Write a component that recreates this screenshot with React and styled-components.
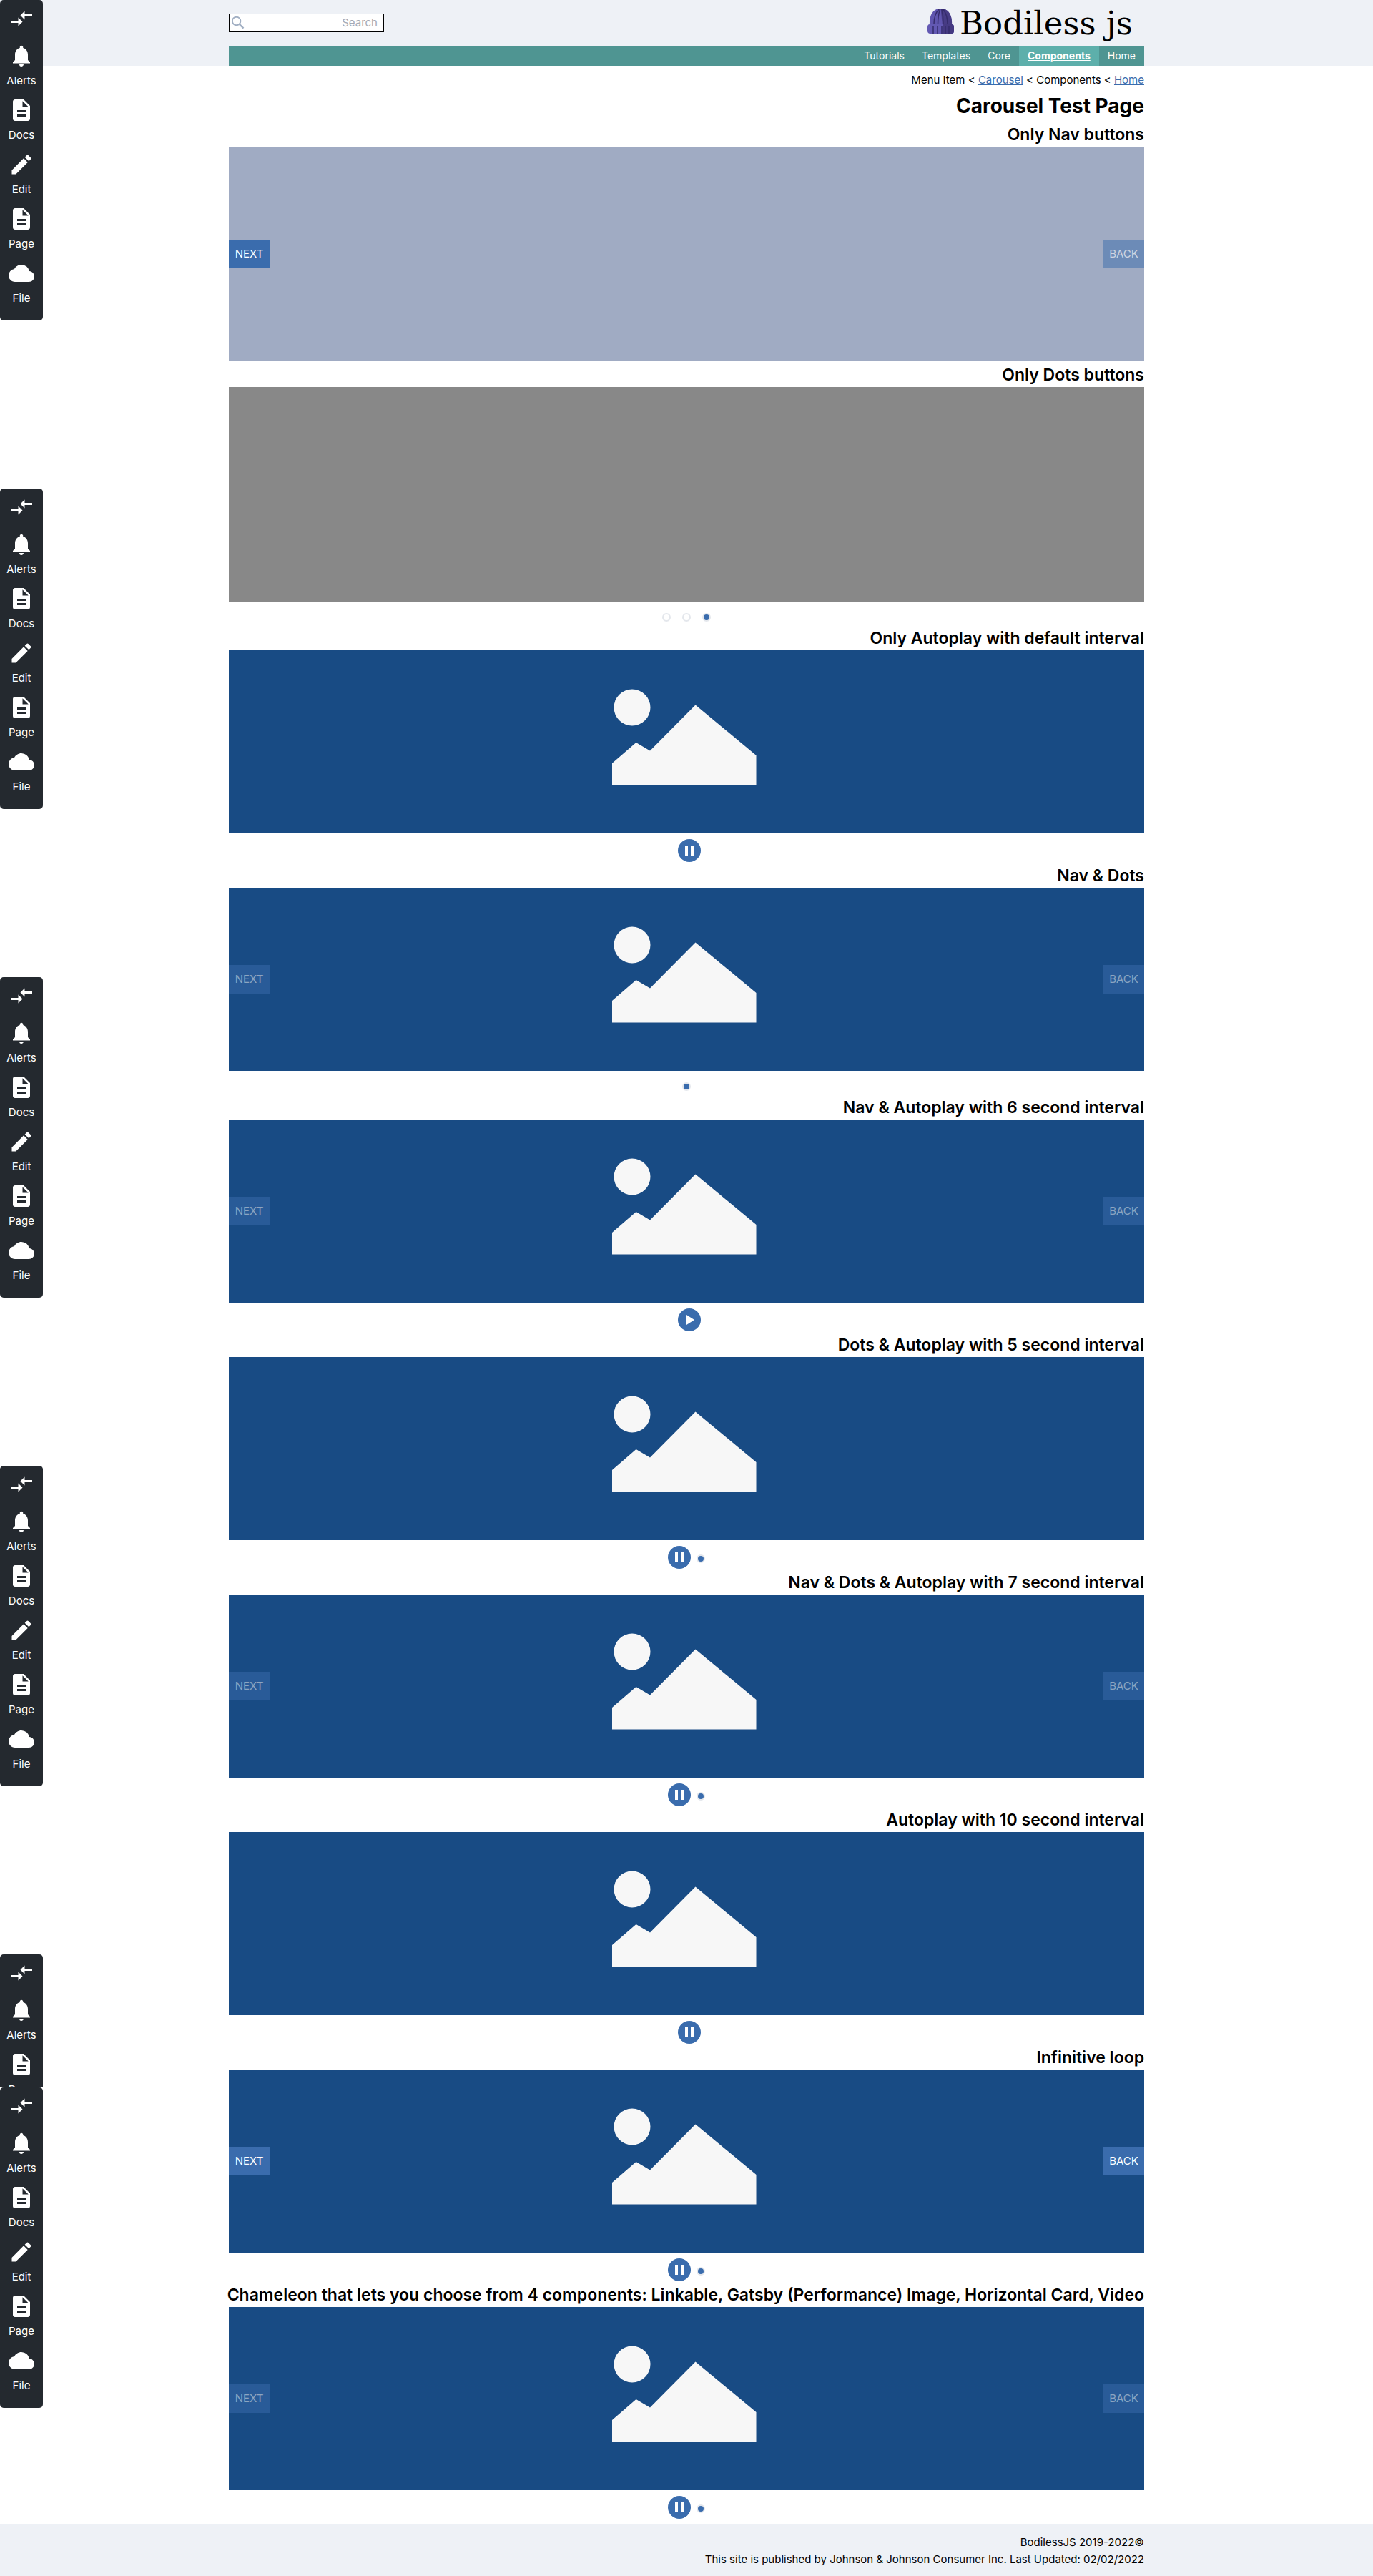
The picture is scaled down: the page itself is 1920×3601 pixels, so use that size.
import React from 'react';
import styled, { createGlobalStyle } from 'styled-components';
import { MdCompareArrows, MdNotifications, MdDescription, MdEdit, MdCloud } from 'react-icons/md';

const GlobalStyle = createGlobalStyle`
  *, *::before, *::after { box-sizing: border-box; }
  body {
    margin: 0;
    background: #fff;
    color: #000;
    font: 16px/24px Inter, 'Liberation Sans', sans-serif;
  }
  button { font: inherit; border: 0; padding: 0; cursor: pointer; }
  h1, h2, p, ul { margin: 0; padding: 0; }
  svg { display: block; flex: none; }
`;

const Page = styled.div`
  position: relative;
`;

const Container = styled.div`
  width: 100%;
  max-width: 1280px;
  margin: 0 auto;
`;

const Header = styled.header`
  background: #eef1f6;
`;

const HeaderTop = styled(Container)`
  display: flex;
  justify-content: space-between;
  align-items: center;
  height: 64px;
`;

const SearchForm = styled.form`
  display: flex;
  align-items: center;
  width: 217px;
  height: 26px;
  padding: 0 8px 0 2px;
  border: 1px solid #000;
  background: #fff;
`;

const SearchButton = styled.button`
  background: none;
  color: #a1afc3;
`;

const SearchInput = styled.input`
  flex: 1;
  min-width: 0;
  border: 0;
  padding: 0;
  background: none;
  outline: none;
  font: inherit;
  font-size: 15px;
  text-align: right;
  &::placeholder { color: #a3a9b5; opacity: 1; }
`;

const Logo = styled.a`
  display: flex;
  margin-right: 12px;
  color: #000;
`;

const Nav = styled.nav`
  display: flex;
  justify-content: flex-end;
  max-width: 1280px;
  margin: 0 auto;
  background: #4f9592;
`;

const NavLink = styled.a`
  padding: 0 12px;
  line-height: 28px;
  font-size: 14px;
  color: #fff;
  background: ${(p) => (p.$active ? '#5dafab' : 'transparent')};
  font-weight: ${(p) => (p.$active ? 700 : 400)};
  text-decoration: ${(p) => (p.$active ? 'underline' : 'none')};
`;

const Breadcrumbs = styled.nav`
  padding-top: 8px;
  font-size: 15px;
  text-align: right;
  a { color: #3a6cad; }
`;

const Title = styled.h1`
  padding: 6px 0 3px;
  font-size: 28px;
  line-height: 36px;
  text-align: right;
`;

const Heading = styled.h2`
  display: flex;
  justify-content: flex-end;
  padding: 5px 0 3px;
  font-size: 23px;
  font-weight: 600;
  line-height: 28px;
  white-space: nowrap;
`;

const Slide = styled.div`
  position: relative;
  display: flex;
  justify-content: center;
  height: ${(p) => (p.$color ? '300px' : '256px')};
  background: ${(p) => p.$color || '#184b84'};
`;

const SlideButton = styled.button`
  position: absolute;
  top: 50%;
  ${(p) => p.$side}: 0;
  width: 57px;
  height: 40px;
  margin-top: -20px;
  background: #3a6cad;
  color: #fff;
  font-size: 15px;
  opacity: ${(p) => (p.disabled ? 0.5 : 1)};
`;

const Controls = styled.div`
  display: flex;
  justify-content: center;
  align-items: center;
  padding-top: 8px;
`;

const PlayButton = styled.button`
  display: grid;
  place-items: center;
  width: 32px;
  height: 32px;
  margin-left: 8px;
  border-radius: 50%;
  background: #3a6cad;
`;

const Dots = styled.div`
  display: flex;
  gap: 16px;
  padding: 8px 8px 4px;
`;

const Dot = styled.button`
  width: 12px;
  height: 12px;
  border: 2px solid #e4e7ec;
  border-radius: 50%;
  background: ${(p) => (p.$current ? '#3a6cad' : '#fff')};
`;

const Footer = styled.footer`
  margin-top: 8px;
  padding: 13px 0 11px;
  background: #eef1f6;
  font-size: 15px;
  text-align: right;
`;

const Rail = styled.div`
  position: absolute;
  top: 0;
  left: 0;
  width: 60px;
`;

const RailSegment = styled.div`
  height: ${(p) => p.$height}px;
  overflow: hidden;
`;

const Toolbar = styled.div`
  display: flex;
  flex-direction: column;
  align-items: center;
  gap: 11px;
  padding: 8px 0 19px;
  border-radius: 5px;
  background: #24292f;
  color: #fff;
`;

const ToolButton = styled.button`
  display: flex;
  flex-direction: column;
  align-items: center;
  gap: 5px;
  background: none;
  color: inherit;
  font-size: 15px;
  line-height: 24px;
`;

const ToggleButton = styled(ToolButton)`
  margin-bottom: 5px;
`;

function BodilessLogo() {
  return (
    <svg width="292" height="60" viewBox="0 0 292 60" role="img" aria-label="Bodiless js">
      <g transform="translate(1 6)">
        <path d="M3 28C2 11 9 4 18.500 4s16.500 7 15.500 24z" fill="#5f55ae" />
        <path d="M18.500 4C28 4 35 11 34 28H21z" fill="#473c85" />
        <path d="M3 26h31q3 0 3 4v5q0 4-3 4H4q-4 0-4-4v-5q0-4 3-4z" fill="#6359b3" />
        <path d="M22 26h12q3 0 3 4v5q0 4-3 4H22z" fill="#453a82" />
        <path d="M16 5Q9 12 9 26M22 5q6 8 6 21M17.500 5q-3 9-3 21M20 5q2 10 2 21M8 28v11M14 28v11M20 28v11M25 28v11M30 28v11" fill="none" stroke="#352c6c" strokeWidth="1.500" />
      </g>
      <text x="46" y="46" fontFamily="'DejaVu Serif', serif" fontSize="45" fill="#000">Bodiless js</text>
    </svg>
  );
}

function Placeholder() {
  return (
    <svg width="208" height="256" viewBox="0 0 208 256" aria-hidden="true">
      <circle cx="28" cy="80" r="25.500" fill="#f7f7f7" />
      <path d="M0 158 33.500 129 53 140.500 116.500 76.500 201.500 147V188.500H0z" fill="#f7f7f7" />
    </svg>
  );
}

function SearchIcon() {
  return (
    <svg width="20" height="22" viewBox="0 0 20 22" fill="none" stroke="currentColor" aria-hidden="true">
      <circle cx="7.600" cy="8.500" r="5.800" strokeWidth="1.900" />
      <path d="M11.800 12.800l5.700 5.700" strokeWidth="2.400" />
    </svg>
  );
}

function PlayIcon({ paused }) {
  return (
    <svg width="32" height="32" viewBox="0 0 32 32" fill="#fff" aria-hidden="true">
      {paused ? <path d="M12 9v14l11-7z" /> : <path d="M10 9h4v14h-4zM18 9h4v14h-4z" />}
    </svg>
  );
}

const tools = [
  ['Alerts', MdNotifications],
  ['Docs', MdDescription],
  ['Edit', MdEdit],
  ['Page', MdDescription],
  ['File', MdCloud],
];

const segments = [
  { height: 683, count: 5 },
  { height: 683, count: 5 },
  { height: 683, count: 5 },
  { height: 683, count: 5 },
  { height: 186, count: 2 },
  { height: 448, count: 5 },
];

function AdminToolbar({ count }) {
  return (
    <Toolbar role="toolbar" aria-label="Admin">
      <ToggleButton type="button" aria-label="Switch side"><MdCompareArrows size={36} /></ToggleButton>
      {tools.slice(0, count).map(([label, Icon]) => (
        <ToolButton type="button" key={label}><Icon size={36} />{label}</ToolButton>
      ))}
    </Toolbar>
  );
}

const carousels = [
  { title: 'Only Nav buttons', color: '#a0abc3', nav: 'start' },
  { title: 'Only Dots buttons', color: '#888888', dots: 3 },
  { title: 'Only Autoplay with default interval', play: true },
  { title: 'Nav & Dots', nav: 'off', dots: 1 },
  { title: 'Nav & Autoplay with 6 second interval', nav: 'off', play: true, paused: true },
  { title: 'Dots & Autoplay with 5 second interval', play: true, dots: 1 },
  { title: 'Nav & Dots & Autoplay with 7 second interval', nav: 'off', play: true, dots: 1 },
  { title: 'Autoplay with 10 second interval', play: true },
  { title: 'Infinitive loop', nav: 'on', play: true, dots: 1 },
  { title: 'Chameleon that lets you choose from 4 components: Linkable, Gatsby (Performance) Image, Horizontal Card, Video', nav: 'off', play: true, dots: 1 },
];

function Carousel({ title, color, nav, dots, play, paused }) {
  return (
    <section>
      <Heading>{title}</Heading>
      <Slide $color={color}>
        {!color && <Placeholder />}
        {nav && (
          <>
            <SlideButton type="button" $side="left" disabled={nav === 'off'}>NEXT</SlideButton>
            <SlideButton type="button" $side="right" disabled={nav !== 'on'}>BACK</SlideButton>
          </>
        )}
      </Slide>
      {(play || dots) && (
        <Controls>
          {play && (
            <PlayButton type="button" aria-label={paused ? 'Play' : 'Pause'}>
              <PlayIcon paused={paused} />
            </PlayButton>
          )}
          {dots && (
            <Dots>
              {Array.from({ length: dots }, (_, i) => (
                <Dot type="button" key={i} $current={i === dots - 1} aria-label={`Slide ${dots - i}`} />
              ))}
            </Dots>
          )}
        </Controls>
      )}
    </section>
  );
}

export default function App() {
  return (
    <Page>
      <GlobalStyle />
      <Header>
        <HeaderTop>
          <SearchForm role="search">
            <SearchButton type="button" aria-label="Search"><SearchIcon /></SearchButton>
            <SearchInput type="text" placeholder="Search" aria-label="Search" />
          </SearchForm>
          <Logo href="#"><BodilessLogo /></Logo>
        </HeaderTop>
        <Nav>
          {['Tutorials', 'Templates', 'Core', 'Components', 'Home'].map((name) => (
            <NavLink href="#" key={name} $active={name === 'Components'}>{name}</NavLink>
          ))}
        </Nav>
      </Header>
      <Container as="main">
        <Breadcrumbs aria-label="Breadcrumb">
          Menu Item &lt; <a href="#">Carousel</a> &lt; Components &lt; <a href="#">Home</a>
        </Breadcrumbs>
        <Title>Carousel Test Page</Title>
        {carousels.map((c) => <Carousel key={c.title} {...c} />)}
      </Container>
      <Footer>
        <Container>
          <p>BodilessJS 2019-2022©</p>
          <p>This site is published by Johnson &amp; Johnson Consumer Inc. Last Updated: 02/02/2022</p>
        </Container>
      </Footer>
      <Rail>
        {segments.map(({ height, count }, i) => (
          <RailSegment key={i} $height={height}><AdminToolbar count={count} /></RailSegment>
        ))}
      </Rail>
    </Page>
  );
}
